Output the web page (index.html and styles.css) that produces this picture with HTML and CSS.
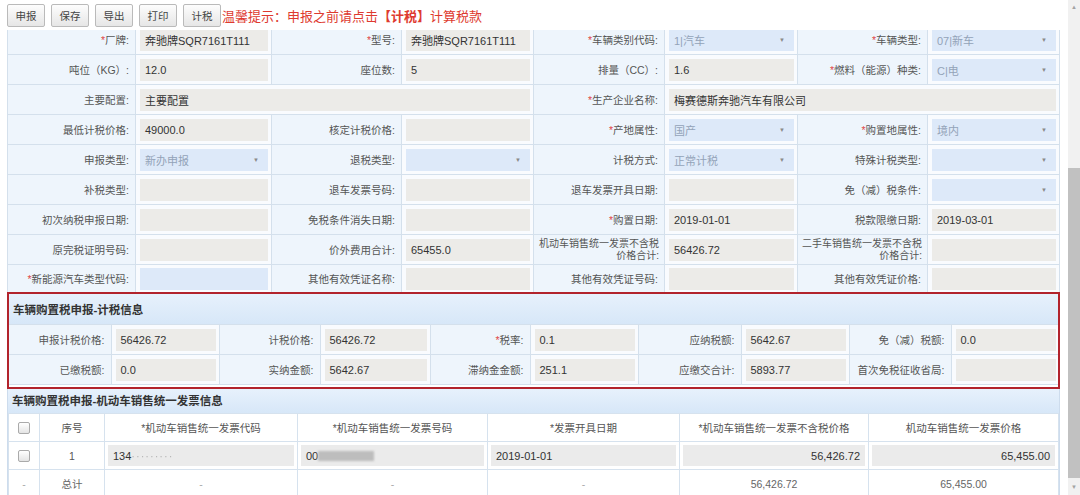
FILE: index.html
```html
<!DOCTYPE html>
<html>
<head>
    <meta charset="UTF-8">
    <title>车辆购置税申报</title>
    <link rel="stylesheet" href="styles.css">
</head>
<body>
    <div class="page">
        <div class="toolbar">
            <div class="btn">申报</div>
            <div class="btn">保存</div>
            <div class="btn">导出</div>
            <div class="btn">打印</div>
            <div class="btn">计税</div>
            <div class="tip">温馨提示：申报之前请点击<b>【计税】</b>计算税款</div>
        </div>

        <div class="content">
            <!-- 车辆基本信息 -->
            <table class="form">
                <colgroup>
                    <col style="width:128px"><col style="width:136px">
                    <col style="width:130px"><col style="width:132px">
                    <col style="width:131px"><col style="width:133px">
                    <col style="width:130px"><col>
                </colgroup>
                <tr>
                    <td class="lb"><span class="req">*</span>厂牌:</td>
                    <td class="vl"><div class="field">奔驰牌SQR7161T111</div></td>
                    <td class="lb"><span class="req">*</span>型号:</td>
                    <td class="vl"><div class="field">奔驰牌SQR7161T111</div></td>
                    <td class="lb"><span class="req">*</span>车辆类别代码:</td>
                    <td class="vl"><div class="field sel">1|汽车</div></td>
                    <td class="lb"><span class="req">*</span>车辆类型:</td>
                    <td class="vl"><div class="field sel">07|新车</div></td>
                </tr>
                <tr>
                    <td class="lb">吨位（KG）:</td>
                    <td class="vl"><div class="field">12.0</div></td>
                    <td class="lb">座位数:</td>
                    <td class="vl"><div class="field">5</div></td>
                    <td class="lb">排量（CC）:</td>
                    <td class="vl"><div class="field">1.6</div></td>
                    <td class="lb"><span class="req">*</span>燃料（能源）种类:</td>
                    <td class="vl"><div class="field sel">C|电</div></td>
                </tr>
                <tr>
                    <td class="lb">主要配置:</td>
                    <td class="vl" colspan="3"><div class="field">主要配置</div></td>
                    <td class="lb"><span class="req">*</span>生产企业名称:</td>
                    <td class="vl" colspan="3"><div class="field">梅赛德斯奔驰汽车有限公司</div></td>
                </tr>
                <tr>
                    <td class="lb">最低计税价格:</td>
                    <td class="vl"><div class="field">49000.0</div></td>
                    <td class="lb">核定计税价格:</td>
                    <td class="vl"><div class="field"></div></td>
                    <td class="lb"><span class="req">*</span>产地属性:</td>
                    <td class="vl"><div class="field sel">国产</div></td>
                    <td class="lb"><span class="req">*</span>购置地属性:</td>
                    <td class="vl"><div class="field sel">境内</div></td>
                </tr>
                <tr>
                    <td class="lb">申报类型:</td>
                    <td class="vl"><div class="field sel">新办申报</div></td>
                    <td class="lb">退税类型:</td>
                    <td class="vl"><div class="field sel"></div></td>
                    <td class="lb">计税方式:</td>
                    <td class="vl"><div class="field sel">正常计税</div></td>
                    <td class="lb">特殊计税类型:</td>
                    <td class="vl"><div class="field sel"></div></td>
                </tr>
                <tr>
                    <td class="lb">补税类型:</td>
                    <td class="vl"><div class="field"></div></td>
                    <td class="lb">退车发票号码:</td>
                    <td class="vl"><div class="field"></div></td>
                    <td class="lb">退车发票开具日期:</td>
                    <td class="vl"><div class="field"></div></td>
                    <td class="lb">免（减）税条件:</td>
                    <td class="vl"><div class="field sel"></div></td>
                </tr>
                <tr>
                    <td class="lb">初次纳税申报日期:</td>
                    <td class="vl"><div class="field"></div></td>
                    <td class="lb">免税条件消失日期:</td>
                    <td class="vl"><div class="field"></div></td>
                    <td class="lb"><span class="req">*</span>购置日期:</td>
                    <td class="vl"><div class="field">2019-01-01</div></td>
                    <td class="lb">税款限缴日期:</td>
                    <td class="vl"><div class="field">2019-03-01</div></td>
                </tr>
                <tr>
                    <td class="lb">原完税证明号码:</td>
                    <td class="vl"><div class="field"></div></td>
                    <td class="lb">价外费用合计:</td>
                    <td class="vl"><div class="field">65455.0</div></td>
                    <td class="lb long">机动车销售统一发票不含税<br>价格合计:</td>
                    <td class="vl"><div class="field">56426.72</div></td>
                    <td class="lb long">二手车销售统一发票不含税<br>价格合计:</td>
                    <td class="vl"><div class="field"></div></td>
                </tr>
                <tr class="last">
                    <td class="lb"><span class="req">*</span>新能源汽车类型代码:</td>
                    <td class="vl"><div class="field blue"></div></td>
                    <td class="lb">其他有效凭证名称:</td>
                    <td class="vl"><div class="field"></div></td>
                    <td class="lb">其他有效凭证号码:</td>
                    <td class="vl"><div class="field"></div></td>
                    <td class="lb">其他有效凭证价格:</td>
                    <td class="vl"><div class="field"></div></td>
                </tr>
            </table>

            <!-- 计税信息 -->
            <div class="tax">
                <div class="sec-title">车辆购置税申报-计税信息</div>
                <table class="form tax-form">
                    <colgroup>
                        <col style="width:103px"><col style="width:108px">
                        <col style="width:101px"><col style="width:110px">
                        <col style="width:100px"><col style="width:108px">
                        <col style="width:103px"><col style="width:108px">
                        <col style="width:102px"><col>
                    </colgroup>
                    <tr>
                        <td class="lb">申报计税价格:</td>
                        <td class="vl"><div class="field">56426.72</div></td>
                        <td class="lb">计税价格:</td>
                        <td class="vl"><div class="field">56426.72</div></td>
                        <td class="lb"><span class="req">*</span>税率:</td>
                        <td class="vl"><div class="field">0.1</div></td>
                        <td class="lb">应纳税额:</td>
                        <td class="vl"><div class="field">5642.67</div></td>
                        <td class="lb">免（减）税额:</td>
                        <td class="vl"><div class="field">0.0</div></td>
                    </tr>
                    <tr>
                        <td class="lb">已缴税额:</td>
                        <td class="vl"><div class="field">0.0</div></td>
                        <td class="lb">实纳金额:</td>
                        <td class="vl"><div class="field">5642.67</div></td>
                        <td class="lb">滞纳金金额:</td>
                        <td class="vl"><div class="field">251.1</div></td>
                        <td class="lb">应缴交合计:</td>
                        <td class="vl"><div class="field">5893.77</div></td>
                        <td class="lb">首次免税征收省局:</td>
                        <td class="vl"><div class="field"></div></td>
                    </tr>
                </table>
            </div>

            <!-- 发票信息 -->
            <div class="invoice">
                <div class="sec-title small">车辆购置税申报-机动车销售统一发票信息</div>
                <table class="grid">
                    <colgroup>
                        <col style="width:31px"><col style="width:65px">
                        <col style="width:193px"><col style="width:190px">
                        <col style="width:192px"><col style="width:189px">
                        <col>
                    </colgroup>
                    <tr class="head">
                        <td><span class="cb"></span></td>
                        <td>序号</td>
                        <td>*机动车销售统一发票代码</td>
                        <td>*机动车销售统一发票号码</td>
                        <td>*发票开具日期</td>
                        <td>*机动车销售统一发票不含税价格</td>
                        <td>机动车销售统一发票价格</td>
                    </tr>
                    <tr class="row">
                        <td><span class="cb"></span></td>
                        <td>1</td>
                        <td class="in"><div class="field">134<span class="blur-dots">·········</span></div></td>
                        <td class="in"><div class="field">00<span class="blur-bar"></span></div></td>
                        <td class="in"><div class="field">2019-01-01</div></td>
                        <td class="in"><div class="field num">56,426.72</div></td>
                        <td class="in"><div class="field num">65,455.00</div></td>
                    </tr>
                    <tr class="total">
                        <td class="dim">-</td>
                        <td>总计</td>
                        <td class="dim">-</td>
                        <td class="dim">-</td>
                        <td class="dim">-</td>
                        <td>56,426.72</td>
                        <td>65,455.00</td>
                    </tr>
                </table>
            </div>
        </div>
    </div>

    <div class="scrollbar">
        <div class="arrow">▲</div>
        <div class="thumb"></div>
        <div class="arrow down">▼</div>
    </div>
</body>
</html>
```

FILE: styles.css
```css
* {
    margin: 0;
    padding: 0;
    box-sizing: border-box;
}

body {
    font-family: "Liberation Sans", "Noto Sans CJK SC", sans-serif;
    font-size: 11px;
    color: #333;
    background: #fff;
    height: 495px;
    overflow: hidden;
    display: flex;
}

.page {
    flex: 1;
    min-width: 0;
    display: flex;
    flex-direction: column;
    padding: 0 8px 0 7px;
}

/* 工具栏 */
.toolbar {
    height: 30px;
    flex-shrink: 0;
    display: flex;
    align-items: center;
    gap: 6px;
    padding-top: 1px;
}

.btn {
    width: 38px;
    height: 23px;
    border: 1px solid #bababa;
    border-radius: 2px;
    background: linear-gradient(#fdfdfd, #e6e6e6);
    color: #444;
    font-size: 10.5px;
    display: flex;
    align-items: center;
    justify-content: center;
}

.tip {
    color: #de3a2f;
    font-size: 13px;
    margin-left: -5px;
}

.tip b {
    font-weight: bold;
}

.content {
    flex: 1;
    overflow: hidden;
}

/* 表单 */
.form {
    width: 100%;
    border-collapse: collapse;
    table-layout: fixed;
    margin-top: -6px;
}

.form td {
    height: 30px;
    border: 1px solid #d4e0ec;
}

.form tr.last td {
    height: 28px;
}

.form .lb {
    background: #eef5fc;
    text-align: right;
    padding-right: 6px;
    color: #555;
    font-size: 10.5px;
    line-height: 12px;
    white-space: nowrap;
}

.form .lb.long {
    font-size: 10px;
    padding-right: 5px;
}

.form .vl {
    background: #f9fbfe;
    padding: 0 3px 0 4px;
}

.req {
    color: #e04848;
}

.field {
    height: 22px;
    background: #ecebe8;
    display: flex;
    align-items: center;
    padding-left: 5px;
    font-size: 11px;
    color: #333;
    white-space: nowrap;
    overflow: hidden;
}

.field.sel {
    background: #dde9f9;
    color: #93a3b8;
    padding-right: 9px;
}

.field.sel::after {
    content: "▼";
    margin-left: auto;
    font-size: 6px;
    color: #8a8a8a;
}

.field.blue {
    background: #dde9f9;
}

.field.num {
    justify-content: flex-end;
    padding-right: 5px;
}

/* 计税信息 */
.tax {
    margin-top: -1px;
    padding-bottom: 3px;
    border: 1px solid #cddced;
    outline: 2px solid #b2232c;
    outline-offset: -2px;
    background: #fff;
}

.sec-title {
    height: 31px;
    background: linear-gradient(#e7f1fc, #d7e7f8);
    font-weight: bold;
    font-size: 11.5px;
    color: #333;
    display: flex;
    align-items: center;
    padding-left: 5px;
}

.sec-title.small {
    height: 24px;
    padding-left: 4px;
    padding-bottom: 2px;
}

.tax-form {
    margin-top: 0;
}

.tax-form td {
    height: 30px;
}

.tax-form tr td:first-child {
    border-left: none;
}

.tax-form tr td:last-child {
    border-right: none;
}

/* 发票信息 */
.invoice {
    border-left: 1px solid #cddced;
    border-right: 1px solid #cddced;
}

.grid {
    width: 100%;
    border-collapse: collapse;
    table-layout: fixed;
}

.grid td {
    border: 1px solid #d6e2ee;
    text-align: center;
    color: #555;
    font-size: 10.5px;
    height: 28px;
    background: #fff;
}

.grid td.in {
    padding: 0 3px;
    text-align: left;
}

.grid .field {
    background: #ebebeb;
    height: 21px;
    color: #333;
}

.grid .total td {
    color: #666;
}

.grid td.dim {
    color: #aaa;
}

.cb {
    display: inline-block;
    width: 12px;
    height: 12px;
    border: 1px solid #aaa;
    border-radius: 2px;
    background: linear-gradient(#fff, #e4e4e4);
    vertical-align: middle;
}

.blur-dots {
    color: #b5b5b5;
    letter-spacing: 1px;
    filter: blur(0.6px);
}

.blur-bar {
    display: inline-block;
    width: 56px;
    height: 10px;
    background: #bdbdbd;
    filter: blur(1px);
}

/* 滚动条 */
.scrollbar {
    width: 12px;
    flex-shrink: 0;
    background: #f1f1f1;
    display: flex;
    flex-direction: column;
    align-items: center;
}

.arrow {
    height: 15px;
    font-size: 6px;
    color: #a3a3a3;
    line-height: 15px;
}

.thumb {
    width: 12px;
    height: 310px;
    margin-top: 153px;
    background: #c1c1c1;
}

.arrow.down {
    margin-top: auto;
}
```
